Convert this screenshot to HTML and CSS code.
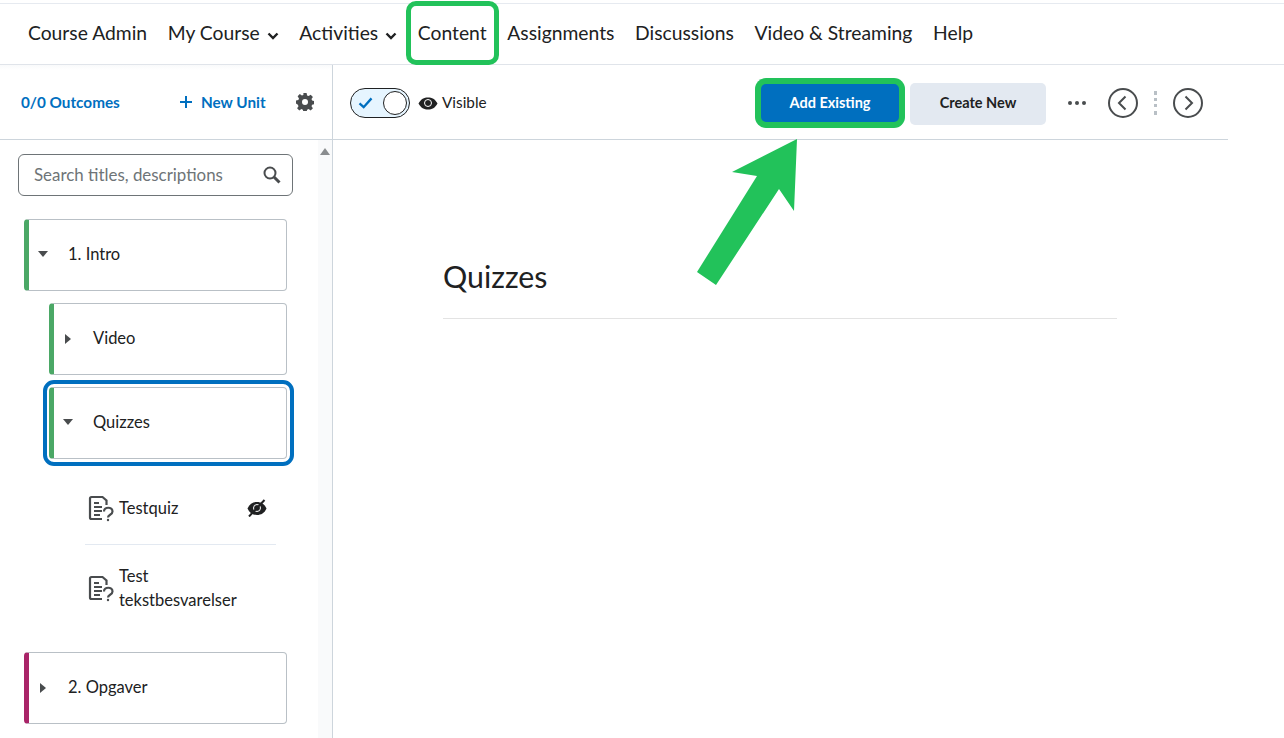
FILE: index.html
```html
<!DOCTYPE html>
<html lang="en">
<head>
    <meta charset="UTF-8">
    <title>Quizzes - Content</title>
    <link rel="stylesheet" href="styles.css">
</head>
<body>

<header class="navbar">
    <a class="nav-item">Course Admin</a>
    <a class="nav-item">My Course <svg class="nav-chevron" viewBox="0 0 12 8"><path d="M1.5 1.5 6 6l4.5-4.5" /></svg></a>
    <a class="nav-item">Activities <svg class="nav-chevron" viewBox="0 0 12 8"><path d="M1.5 1.5 6 6l4.5-4.5" /></svg></a>
    <a class="nav-item nav-highlight">Content</a>
    <a class="nav-item">Assignments</a>
    <a class="nav-item">Discussions</a>
    <a class="nav-item">Video &amp; Streaming</a>
    <a class="nav-item">Help</a>
</header>

<div class="layout">
    <aside class="sidebar">
        <div class="sidebar-head">
            <a class="outcomes">0/0 Outcomes</a>
            <a class="new-unit">
                <svg class="plus-icon" viewBox="0 0 12 12"><path d="M6 0v12M0 6h12" /></svg>
                New Unit
            </a>
            <svg class="gear-icon" viewBox="0 0 18 18">
                <path d="M7.4 0h3.2l.5 2.500 1.500.6 2.100-1.400 2.200 2.200-1.400 2.100.6 1.500 2.400.5v3.200l-2.400.5-.6 1.500 1.400 2.100-2.200 2.200-2.100-1.400-1.500.6-.5 2.500H7.400l-.5-2.500-1.500-.6-2.100 1.400-2.200-2.200 1.400-2.100-.6-1.500L0 10.600V7.400l2.400-.5.6-1.500-1.400-2.100 2.200-2.200 2.100 1.400 1.500-.6z" />
                <circle class="gear-hole" cx="9" cy="9" r="3" />
            </svg>
        </div>
        <div class="sidebar-body">
            <div class="tree">
                <div class="search-box">
                    <span class="search-text">Search titles, descriptions</span>
                    <svg class="search-icon" viewBox="0 0 18 18">
                        <circle cx="7" cy="7" r="5.5" />
                        <path d="M11 11l5.5 5.5" />
                    </svg>
                </div>

                <div class="unit unit-green">
                    <span class="caret caret-down"></span>
                    <span>1. Intro</span>
                </div>
                <div class="unit unit-green unit-sub">
                    <span class="caret caret-right"></span>
                    <span>Video</span>
                </div>
                <div class="unit unit-green unit-sub unit-active">
                    <span class="caret caret-down"></span>
                    <span>Quizzes</span>
                </div>

                <div class="topic topic-divided">
                    <svg class="quiz-icon" viewBox="0 0 24 24">
                        <path class="quiz-sheet" d="M13 23H2.500A1.500 1.500 0 0 1 1 21.500v-19A1.500 1.500 0 0 1 2.500 1h11l4 3.500V9" />
                        <path class="quiz-sheet" d="M5 7h5M5 11h8M5 15h8M5 19h6" />
                        <path class="quiz-sheet" d="M15 15.500c0-5 8.500-5 8.500 0 0 3.500-4.500 3-4.500 6" />
                        <circle class="quiz-dot" cx="19" cy="24" r="1.200" />
                    </svg>
                    <span class="topic-name">Testquiz</span>
                    <svg class="hidden-icon" viewBox="0 0 20 18">
                        <path class="eye-fill" d="M0.500 9.500C2.500 5 6 3 10 3s7.500 2 9.500 6.500C17.500 14 14 16 10 16S2.500 14 0.500 9.500z" />
                        <circle class="eye-pupil" cx="10" cy="9" r="3.500" />
                        <path class="eye-slash" d="M2 17.500 17.500 1" />
                    </svg>
                </div>
                <div class="topic topic-tall">
                    <svg class="quiz-icon" viewBox="0 0 24 24">
                        <path class="quiz-sheet" d="M13 23H2.500A1.500 1.500 0 0 1 1 21.500v-19A1.500 1.500 0 0 1 2.500 1h11l4 3.500V9" />
                        <path class="quiz-sheet" d="M5 7h5M5 11h8M5 15h8M5 19h6" />
                        <path class="quiz-sheet" d="M15 15.500c0-5 8.500-5 8.500 0 0 3.500-4.500 3-4.500 6" />
                        <circle class="quiz-dot" cx="19" cy="24" r="1.200" />
                    </svg>
                    <span class="topic-name">Test<br>tekstbesvarelser</span>
                </div>

                <div class="unit unit-pink">
                    <span class="caret caret-right"></span>
                    <span>2. Opgaver</span>
                </div>
            </div>
            <div class="scroll-track"><span class="scroll-up"></span></div>
        </div>
    </aside>

    <main class="content">
        <div class="toolbar">
            <div class="toggle"><svg class="toggle-check" viewBox="0 0 16 13"><path d="M1.500 7 6 11l8.500-9.500" /></svg><span class="toggle-knob"></span></div>
            <svg class="eye-icon" viewBox="0 0 20 13">
                <path class="eye-fill" d="M0.500 6.500C3 2 6 .5 10 .5s7 1.500 9.500 6C17 11 14 12.500 10 12.500S3 11 0.500 6.500z" />
                <circle class="eye-pupil" cx="10" cy="6" r="3.500" />
            </svg>
            <span class="visible-label">Visible</span>
            <button class="btn btn-primary">Add Existing</button>
            <button class="btn btn-secondary">Create New</button>
            <span class="more-dots"><i></i><i></i><i></i></span>
            <svg class="round-arrow round-prev" viewBox="0 0 30 30"><circle cx="15" cy="15" r="14" /><path d="M17.500 8.500 11 15l6.500 6.500" /></svg>
            <span class="pager-sep"></span>
            <svg class="round-arrow" viewBox="0 0 30 30"><circle cx="15" cy="15" r="14" /><path d="M12.500 8.500 19 15l-6.500 6.500" /></svg>
        </div>
        <div class="page-body">
            <h1 class="page-title">Quizzes</h1>
        </div>
    </main>
</div>

<!-- annotation arrow drawn over the screenshot -->
<svg class="callout-arrow" viewBox="0 0 1284 738">
    <polygon points="797,139 732,172 757,176 697,272 716,285 779,189 794,211" />
</svg>

</body>
</html>
```

FILE: styles.css
```css
html, body {
    height: 100%;
}

body {
    font-family: 'Lato', 'Open Sans', sans-serif;
    margin: 0;
    padding: 0;
    color: #202122;
    background-color: #ffffff;
    overflow: hidden;
    display: flex;
    flex-direction: column;
}

.navbar {
    display: flex;
    align-items: center;
    gap: 20.7px;
    box-sizing: border-box;
    height: 62px;
    margin-top: 3px;
    padding: 0 0 4px 28px;
    border-top: 1px solid #e6eaf0;
    border-bottom: 1px solid #e0e4ea;
    font-size: 19.3px;
    flex-shrink: 0;
}

.nav-item {
    position: relative;
    white-space: nowrap;
}

.nav-chevron {
    width: 12px;
    height: 8px;
    margin-left: 2px;
    fill: none;
    stroke: #202122;
    stroke-width: 2.4;
}

.nav-highlight::after {
    content: "";
    position: absolute;
    left: -12px;
    right: -12px;
    top: -20px;
    bottom: -21px;
    border: 5px solid #22c25a;
    border-radius: 10px;
}

.layout {
    flex: 1;
    display: flex;
    min-height: 0;
}

.sidebar {
    width: 332px;
    border-right: 1px solid #cdd5dc;
    display: flex;
    flex-direction: column;
    flex-shrink: 0;
}

.sidebar-head {
    height: 74px;
    border-bottom: 1px solid #cdd5dc;
    display: flex;
    align-items: center;
    padding-left: 21px;
    font-size: 15.3px;
    font-weight: 700;
    color: #006fbf;
    background: linear-gradient(to bottom, #f9fafb 0, #ffffff 5px);
}

.outcomes {
    width: 159px;
}

.new-unit {
    display: flex;
    align-items: center;
    gap: 9px;
    width: 116px;
}

.plus-icon {
    width: 12px;
    height: 12px;
    fill: none;
    stroke: #006fbf;
    stroke-width: 2;
}

.gear-icon {
    width: 18px;
    height: 18px;
    fill: #494c4e;
}

.gear-hole {
    fill: #ffffff;
}

.sidebar-body {
    flex: 1;
    display: flex;
    min-height: 0;
}

.tree {
    flex: 1;
    padding: 14px 31px 0 24px;
    font-size: 16.5px;
}

.search-box {
    display: flex;
    align-items: center;
    justify-content: space-between;
    box-sizing: border-box;
    height: 42px;
    margin: 0 -6px 23px -6px;
    padding: 0 11px 0 15px;
    border: 1px solid #6e7477;
    border-radius: 6px;
    color: #6e7477;
}

.search-text {
    font-size: 16.9px;
    margin-bottom: 2px;
}

.search-icon {
    width: 18px;
    height: 18px;
    fill: none;
    stroke: #494c4e;
    stroke-width: 2;
}

.search-icon path {
    stroke-width: 3;
}

.unit {
    position: relative;
    display: flex;
    align-items: center;
    box-sizing: border-box;
    height: 72px;
    margin-bottom: 12px;
    padding: 0 0 2px 39px;
    border: 1px solid #b9c0c6;
    border-left: 5px solid #4ba866;
    border-radius: 4px;
}

.unit-sub {
    margin-left: 25px;
}

.unit-pink {
    border-left-color: #a92468;
    margin-top: 21px;
}

.unit-active {
    margin-bottom: 0;
}

.unit-active::after {
    content: "";
    position: absolute;
    left: -11px;
    right: -8px;
    top: -8px;
    bottom: -8px;
    border: 4px solid #006fbf;
    border-radius: 11px;
}

.caret {
    position: absolute;
    width: 0;
    height: 0;
}

.caret-down {
    left: 9px;
    top: 31px;
    border-left: 5.5px solid transparent;
    border-right: 5.5px solid transparent;
    border-top: 6px solid #494c4e;
}

.caret-right {
    left: 11px;
    top: 30px;
    border-top: 5px solid transparent;
    border-bottom: 5px solid transparent;
    border-left: 6px solid #494c4e;
}

.topic {
    display: flex;
    align-items: center;
    gap: 6px;
    margin-left: 61px;
    margin-right: 11px;
    padding-left: 4px;
    line-height: 24px;
}

.topic-divided {
    height: 86px;
    padding-top: 12px;
    box-sizing: border-box;
    border-bottom: 1px solid #e3e9f1;
}

.topic-tall {
    height: 86px;
}

.quiz-icon {
    width: 24px;
    height: 24px;
    flex-shrink: 0;
    overflow: visible;
}

.quiz-sheet {
    fill: none;
    stroke: #494c4e;
    stroke-width: 2.2;
}

.quiz-dot {
    fill: #494c4e;
}

.topic-name {
    flex: 1;
}

.hidden-icon {
    width: 20px;
    height: 18px;
    margin-right: 9px;
}

.eye-fill {
    fill: #202122;
}

.eye-pupil {
    fill: #202122;
    stroke: #ffffff;
    stroke-width: 1;
}

.eye-slash {
    stroke: #202122;
    stroke-width: 2;
}

.scroll-track {
    width: 14px;
    background-color: #f9fafb;
    flex-shrink: 0;
    position: relative;
}

.scroll-up {
    position: absolute;
    left: 2px;
    top: 8px;
    border-left: 5px solid transparent;
    border-right: 5px solid transparent;
    border-bottom: 7px solid #8a8d8f;
}

.content {
    flex: 1;
    min-width: 0;
}

.toolbar {
    width: 895px;
    height: 72px;
    padding-top: 2px;
    display: flex;
    align-items: center;
    border-bottom: 1px solid #cdd5dc;
}

.toggle {
    display: flex;
    align-items: center;
    justify-content: space-between;
    box-sizing: border-box;
    width: 60px;
    height: 30px;
    margin-left: 17px;
    padding: 0 2px 0 7px;
    border: 1px solid #202122;
    border-radius: 15px;
    background-color: #e6f5ff;
}

.toggle-check {
    width: 15px;
    height: 12px;
    fill: none;
    stroke: #006fbf;
    stroke-width: 2.5;
}

.toggle-knob {
    width: 22px;
    height: 22px;
    border: 1px solid #202122;
    border-radius: 50%;
    background-color: #ffffff;
}

.eye-icon {
    width: 20px;
    height: 13px;
    margin-left: 8px;
}

.visible-label {
    margin: 0 0 2px 4px;
    font-size: 15.3px;
    width: 319px;
}

.btn {
    font-family: inherit;
    font-size: 14.5px;
    font-weight: 700;
    height: 42px;
    padding: 0 0 2px;
    border: none;
    border-radius: 5px;
    cursor: pointer;
}

.btn-primary {
    width: 138px;
    height: 38px;
    color: #ffffff;
    background-color: #006fbf;
    box-shadow: 0 0 0 6px #22c25a;
}

.btn-secondary {
    width: 136px;
    margin: 2px 0 0 11px;
    padding-bottom: 4px;
    color: #202122;
    background-color: #e3e9f1;
}

.more-dots {
    display: flex;
    gap: 3px;
    margin-left: 22px;
}

.more-dots i {
    width: 4px;
    height: 4px;
    border-radius: 50%;
    background-color: #494c4e;
}

.round-arrow {
    width: 30px;
    height: 30px;
    fill: none;
    stroke: #494c4e;
    stroke-width: 2;
}

.round-prev {
    margin-left: 22px;
}

.pager-sep {
    height: 24px;
    margin: 0 16px;
    border-left: 3px dotted #b9c0c6;
}

.page-body {
    width: 674px;
    margin-left: 110px;
    padding-top: 115px;
}

.page-title {
    margin: 0;
    padding-bottom: 21px;
    font-size: 30.3px;
    font-weight: 400;
    line-height: 42px;
    border-bottom: 1px solid #e3e3e3;
}

.callout-arrow {
    position: absolute;
    left: 0;
    top: 0;
    width: 1284px;
    height: 738px;
    fill: #22c25a;
    pointer-events: none;
}
```
